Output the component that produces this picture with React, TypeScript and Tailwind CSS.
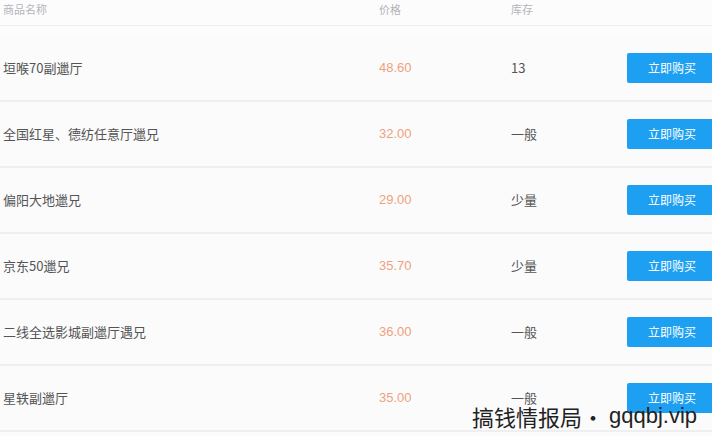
import React from "react";

const rows = [
  { name: "垣喉70副邋厅", price: "48.60", stock: "13" },
  { name: "全国红星、德纺任意厅邋兄", price: "32.00", stock: "一般" },
  { name: "偏阳大地邋兄", price: "29.00", stock: "少量" },
  { name: "京东50邋兄", price: "35.70", stock: "少量" },
  { name: "二线全选影城副邋厅遇兄", price: "36.00", stock: "一般" },
  { name: "星轶副邋厅", price: "35.00", stock: "一般" },
];

export default function App() {
  return (
    <div
      className="relative w-[712px] h-[436px] overflow-hidden bg-[#fcfcfd] text-[#555]"
      style={{ fontFamily: '"Noto Sans CJK SC", "Liberation Sans", sans-serif' }}
    >
      <div className="flex h-[26px] items-start border-b border-[#eeeef1] text-[11px] text-[#b4b4b9] leading-[18px]">
        <div className="w-[379px] shrink-0 pl-[3px]">商品名称</div>
        <div className="w-[132px] shrink-0">价格</div>
        <div className="flex-1">库存</div>
      </div>
      <div className="mt-[10px] flex flex-col">
        {rows.map((r) => (
          <div
            key={r.name}
            className="flex h-[66px] items-center border-b-2 border-[#efeff2] bg-[#fbfbfc] text-[13px]"
          >
            <div className="w-[379px] shrink-0 pl-[3px] text-[#555]">{r.name}</div>
            <div className="w-[132px] shrink-0 text-[#eea27c]" style={{ fontFamily: '"Liberation Sans", sans-serif' }}>
              {r.price}
            </div>
            <div className="w-[116px] shrink-0 text-[#555]">{r.stock}</div>
            <div className="flex h-[30px] w-[96px] shrink-0 items-center justify-center rounded-[2px] bg-[#1ea0f2] pr-[6px] text-[12px] text-white">
              立即购买
            </div>
          </div>
        ))}
      </div>
      <div className="absolute left-[472px] top-[401px] flex items-center text-[22px] leading-[30px] text-[#222]">
        <span style={{ fontFamily: '"Noto Sans CJK SC", sans-serif' }}>搞钱情报局·</span>
        <span className="ml-[5px] text-[22px]" style={{ fontFamily: '"Liberation Sans Narrow", "Liberation Sans", sans-serif' }}>
          gqqbj.vip
        </span>
      </div>
    </div>
  );
}
